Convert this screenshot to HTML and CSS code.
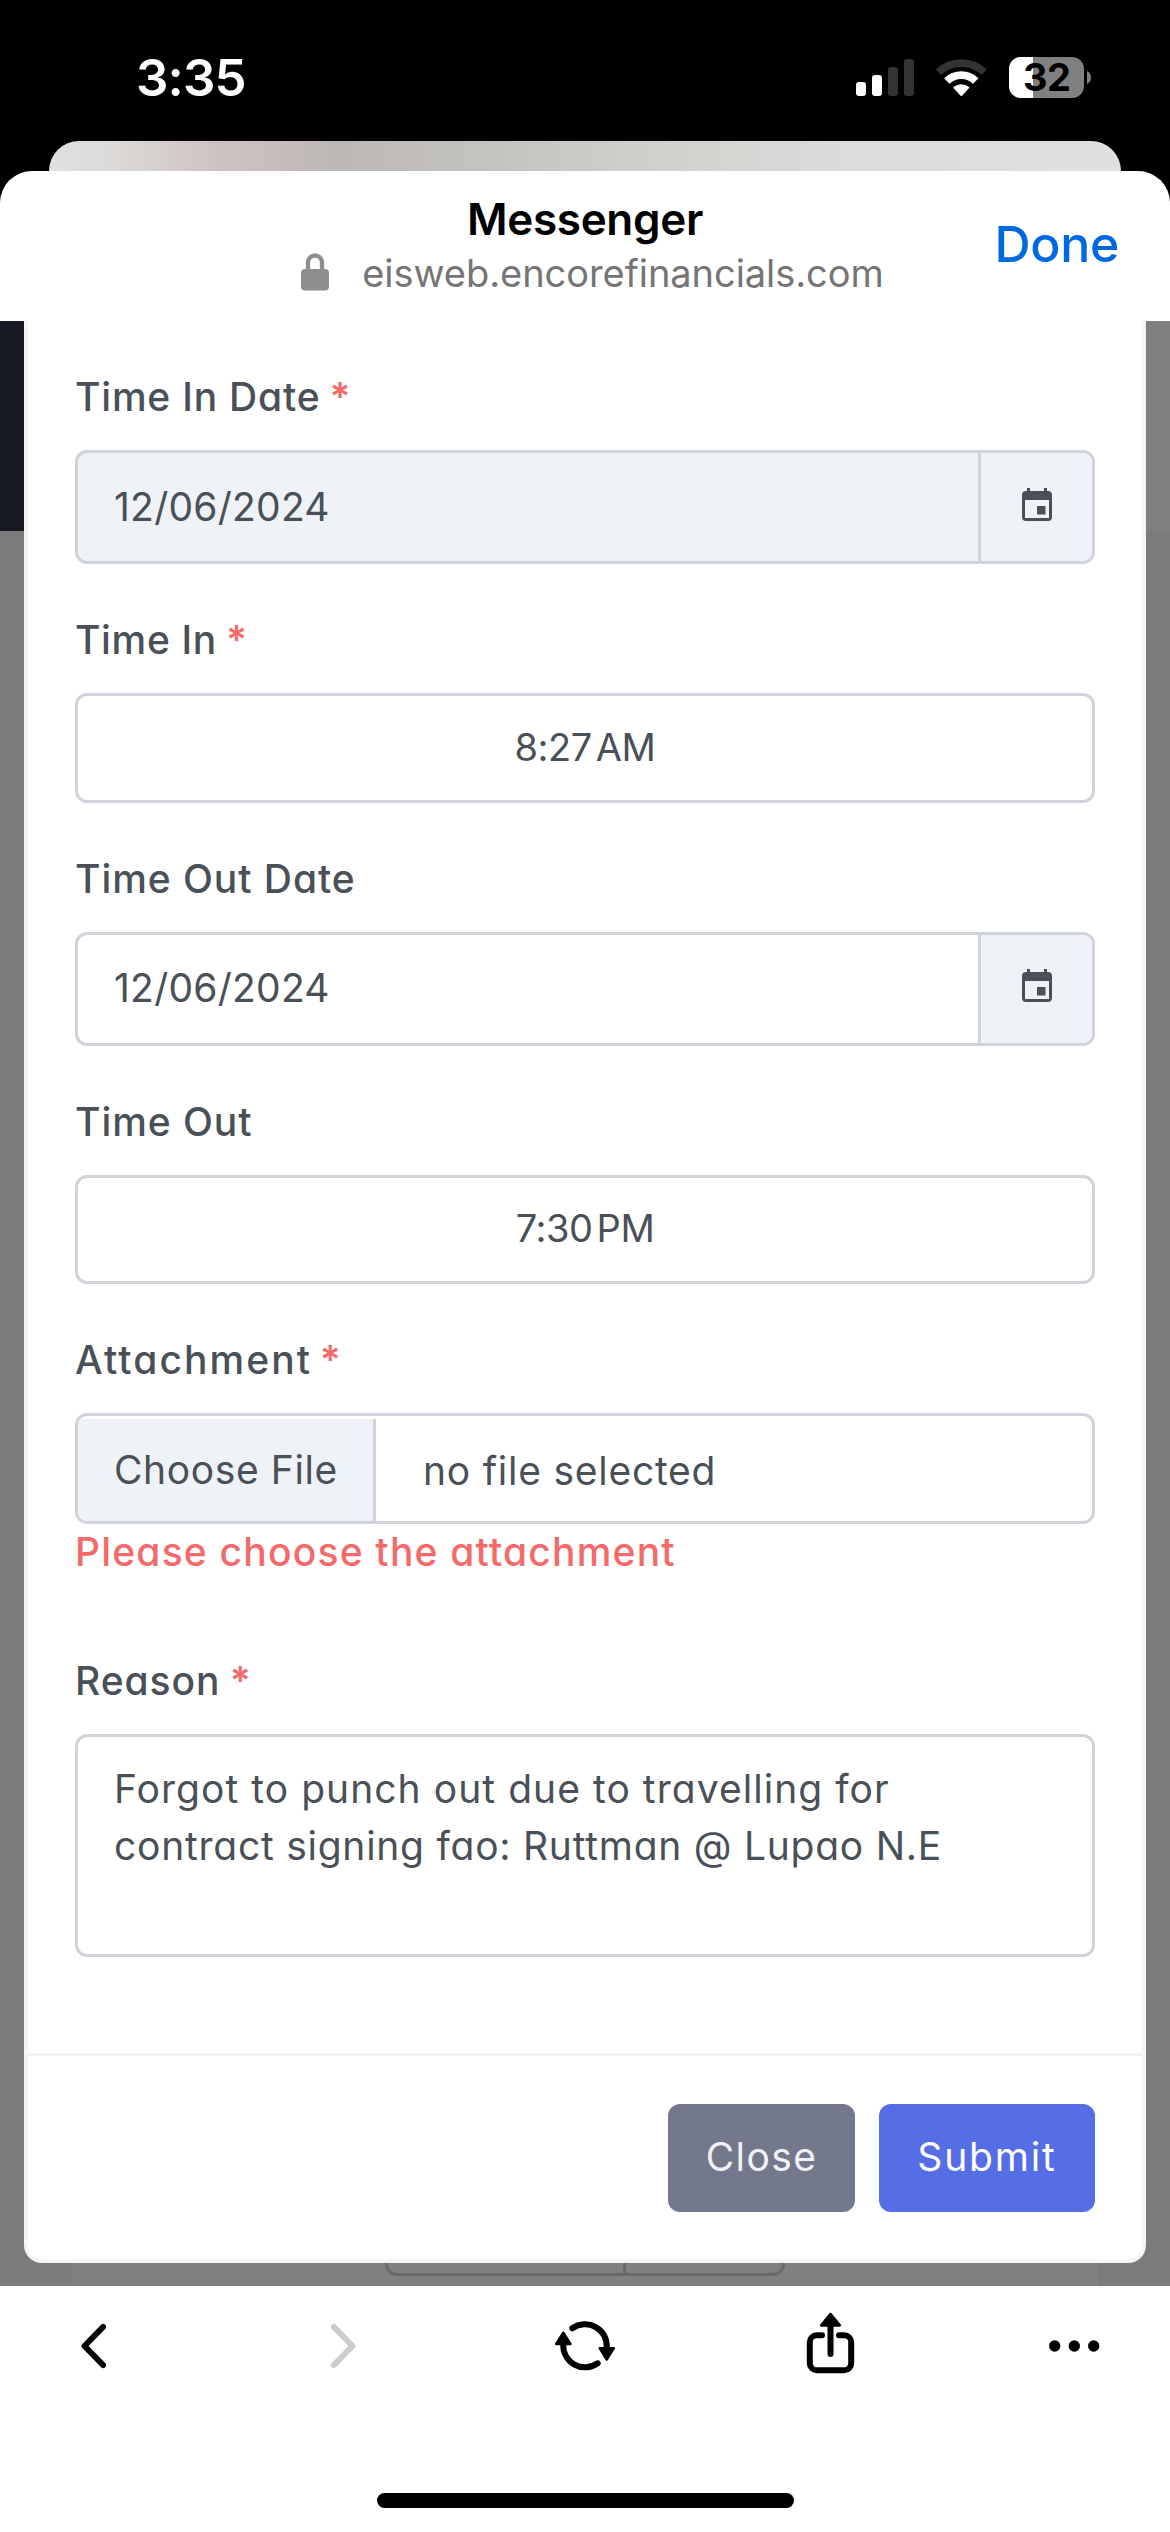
FILE: index.html
```html
<!DOCTYPE html>
<html lang="en">
<head>
<meta charset="utf-8">
<title>Messenger</title>
<link rel="stylesheet" href="styles.css">
</head>
<body>
<div class="status-bar">
  <span class="clock">3:35</span>
  <div class="status-icons">
    <svg width="58" height="42" viewBox="0 0 58 42">
      <rect x="0" y="25" width="10" height="14" rx="3" fill="#fff"/>
      <rect x="16" y="18" width="10" height="21" rx="3" fill="#fff"/>
      <rect x="32" y="10" width="10" height="29" rx="3" fill="#333"/>
      <rect x="48" y="2" width="10" height="37" rx="3" fill="#333"/>
    </svg>
    <svg width="51" height="42" viewBox="0 0 51 42" fill="none" stroke-width="7.7">
      <path d="M2.4 15.3A33 33 0 0 1 48.2 15.3" stroke="#333"/>
      <path d="M10.8 24A20.8 20.8 0 0 1 39.8 24" stroke="#fff"/>
      <path d="M25.3 38L18.4 30.6A11 11 0 0 1 32.2 30.6Z" fill="#fff" stroke="#fff" stroke-width="2" stroke-linejoin="round"/>
    </svg>
    <div class="battery">
      <svg width="83" height="42" viewBox="0 0 83 42">
        <rect x="0" y="0" width="75" height="41" rx="12" fill="#808080"/>
        <path d="M24 0H12A12 12 0 0 0 0 12V29A12 12 0 0 0 12 41H24Z" fill="#fff"/>
        <path d="M78 14Q82 16 82 20.500T78 27Z" fill="#808080"/>
      </svg>
      <span>32</span>
    </div>
  </div>
</div>
<div class="sheet-behind"></div>
<div class="sheet">
  <header class="browser-header">
    <div class="page-info">
      <div class="page-title">Messenger</div>
      <div class="page-url">
        <svg width="28" height="38" viewBox="0 0 28 38">
          <path d="M7 18V9.500a7 7 0 0 1 14 0V18" fill="none" stroke="#8e8e8e" stroke-width="4.300"/>
          <rect x="0" y="16" width="28" height="21.500" rx="4" fill="#8e8e8e"/>
        </svg>
        <span>eisweb.encorefinancials.com</span>
      </div>
    </div>
    <a class="done">Done</a>
  </header>

  <main class="webview">
    <div class="modal">
      <form class="modal-body">
        <div class="field">
          <label class="in-date">Time In Date <b>*</b></label>
          <div class="control group disabled">
            <span class="value">12/06/2024</span>
            <span class="addon">
              <svg width="30" height="34" viewBox="0 0 30 34"><path fill="#495057" fill-rule="evenodd" d="M5 0h3v3h14V0h3v3h1a4 4 0 0 1 4 4v22a4 4 0 0 1-4 4H4a4 4 0 0 1-4-4V7a4 4 0 0 1 4-4h1zM3 12v18h24V12zM15 18h8.500v8.500H15z"/></svg>
            </span>
          </div>
        </div>
        <div class="field">
          <label class="time-in">Time In <b>*</b></label>
          <div class="control time">8:27<i></i>AM</div>
        </div>
        <div class="field">
          <label>Time Out Date</label>
          <div class="control group out">
            <span class="value">12/06/2024</span>
            <span class="addon">
              <svg width="30" height="34" viewBox="0 0 30 34"><path fill="#495057" fill-rule="evenodd" d="M5 0h3v3h14V0h3v3h1a4 4 0 0 1 4 4v22a4 4 0 0 1-4 4H4a4 4 0 0 1-4-4V7a4 4 0 0 1 4-4h1zM3 12v18h24V12zM15 18h8.500v8.500H15z"/></svg>
            </span>
          </div>
        </div>
        <div class="field">
          <label>Time Out</label>
          <div class="control time out">7:30<i></i>PM</div>
        </div>
        <div class="field attachment">
          <label class="wide">Attachment <b>*</b></label>
          <div class="control file">
            <span class="choose">Choose File</span>
            <span class="filename">no file selected</span>
          </div>
          <div class="error">Please choose the attachment</div>
        </div>
        <div class="field">
          <label>Reason <b>*</b></label>
          <div class="control reason"><span class="line-1">Forgot to punch out due to travelling for</span><br>contract signing fao: Ruttman @ Lupao N.E</div>
        </div>
      </form>
      <footer class="modal-footer">
        <span class="btn close">Close</span>
        <span class="btn submit">Submit</span>
      </footer>
    </div>
    <div class="pager"><span></span><span></span></div>
  </main>

  <nav class="toolbar">
    <svg width="60" height="70" viewBox="0 0 60 70" fill="none" stroke="#000" stroke-width="6" stroke-linecap="round" stroke-linejoin="round"><path d="M39 16L20.500 35L39 54"/></svg>
    <svg width="60" height="70" viewBox="0 0 60 70" fill="none" stroke="#ccc" stroke-width="6" stroke-linecap="round" stroke-linejoin="round"><path d="M25 16L43.500 35L25 54"/></svg>
    <svg width="62" height="70" viewBox="-2 -5 62 70" fill="none" stroke="#000" stroke-width="6" stroke-linecap="round" stroke-linejoin="round">
      <path d="M17.300 12.300A21.800 21.800 0 0 1 51.700 32M42.700 47.300A21.800 21.800 0 0 1 8.300 28"/>
      <path d="M44.700 32.200H58.800L51.700 43.500ZM1.200 28H15.400L8.300 16.700Z" fill="#000" stroke-width="2.500"/>
    </svg>
    <svg width="60" height="70" viewBox="0.5 1 60 70" fill="none" stroke="#000" stroke-width="6" stroke-linecap="round" stroke-linejoin="round">
      <path d="M22.500 25.300H17.300A7 7 0 0 0 10.300 32.300V53.300A7 7 0 0 0 17.300 60.300H44.700A7 7 0 0 0 51.700 53.300V32.300A7 7 0 0 0 44.700 25.300H39.500"/>
      <path d="M31 12V44"/>
      <path d="M21.800 15.300H40.200L31 4.200Z" fill="#000" stroke-width="2.800"/>
    </svg>
    <svg width="60" height="70" viewBox="0 0 60 70"><circle cx="10.700" cy="35" r="5.700"/><circle cx="30.300" cy="35" r="5.700"/><circle cx="49.700" cy="35" r="5.700"/></svg>
  </nav>
  <div class="home-bar"></div>
</div>
</body>
</html>
```
FILE: styles.css
```css
* { box-sizing: border-box; }

body {
  margin: 0;
  width: 1170px;
  height: 2532px;
  overflow: hidden;
  background: #000;
  font-family: "Inter", "Liberation Sans", sans-serif;
}

svg { display: block; flex: none; }

/* Device status bar */
.status-bar {
  display: flex;
  justify-content: space-between;
  align-items: flex-start;
  height: 141px;
  padding: 48px 78px 0 136px;
}
.clock {
  color: #fff;
  font-size: 51px;
  font-weight: 600;
  line-height: 60px;
  letter-spacing: -0.85px;
}
.status-icons { display: flex; gap: 22px; padding-top: 9px; }
.battery { position: relative; }
.battery span {
  position: absolute;
  left: 14px;
  top: -4px;
  font-size: 38px;
  font-weight: 700;
  line-height: 48px;
  letter-spacing: -0.5px;
}

/* Stacked sheets */
.sheet-behind {
  height: 30px;
  margin: 0 49px;
  border-radius: 30px 30px 0 0;
  background: linear-gradient(90deg, #e0e0e0, #dddcda 5%, #cec2c0 16%, #bdb8b5 27%, #c5c5c2 44%, #d0cfca 55%, #dcdcdc 75%, #e0e0e0);
}
.sheet {
  height: 2361px;
  border-radius: 32px 32px 0 0;
  background: #fff;
  overflow: hidden;
}
.browser-header {
  display: grid;
  grid-template-columns: 1fr auto 1fr;
  height: 150px;
  padding-top: 22px;
}
.page-info { grid-column: 2; }
.page-title {
  font-size: 44px;
  font-weight: 600;
  line-height: 52px;
  letter-spacing: -0.3px;
  text-align: center;
}
.page-url {
  display: flex;
  gap: 33px;
  margin-top: 2px;
  padding-left: 15px;
  color: #757575;
  font-size: 38px;
  line-height: 52px;
  letter-spacing: -0.05px;
}
.page-url svg { margin-top: 6px; }
.done {
  justify-self: end;
  margin: 21px 51px 0 0;
  color: #0068e0;
  font-size: 50px;
  font-weight: 500;
  line-height: 60px;
  letter-spacing: -0.3px;
}

/* Dimmed page with the open dialog */
.webview {
  height: 1965px;
  padding: 0 24px;
  background:
    linear-gradient(#161922, #161922) 0 0 / 585px 210px no-repeat,
    linear-gradient(#808080, #808080) 100% 0 / 585px 210px no-repeat,
    linear-gradient(#808080, #808080) 72px 100% / 1026px 60px no-repeat,
    #7b7b7c;
}
.modal {
  height: 1942px;
  border: 4px solid #f5f5f5;
  border-top: 0;
  border-radius: 0 0 18px 18px;
  background: #fff;
  color: #495057;
  font-size: 39px;
  line-height: 58px;
  letter-spacing: 0.75px;
  white-space: nowrap;
  font-feature-settings: "cv11";
}
.modal-body { height: 1732px; padding: 47px 47px 0; }
.field { margin-bottom: 47px; }
.field label {
  display: block;
  margin-bottom: 24px;
  font-weight: 500;
  letter-spacing: 0.95px;
}
.field label b {
  margin-left: -2px;
  color: #f46a6a;
  font-weight: 600;
}
.field label.in-date { letter-spacing: 0.8px; }
.field label.time-in { letter-spacing: 0.65px; }
.field label.wide { letter-spacing: 2.1px; }
.field label.wide b { margin-left: -5px; }
.control {
  border: 3px solid #ced4da;
  border-radius: 12px;
  overflow: hidden;
}
.group { display: flex; height: 114px; }
.disabled { background: #eff2f7; }
.value { flex: 1; padding: 25px 0 0 36px; letter-spacing: 0.25px; }
.addon {
  display: flex;
  justify-content: center;
  width: 114px;
  padding-top: 35px;
  border-left: 3px solid #ced4da;
  background: #eff2f7;
}
.group.out .value { padding-top: 24px; }
.group.out .addon { padding-top: 34px; }
.time {
  display: flex;
  justify-content: center;
  height: 110px;
  padding-top: 22px;
  font-size: 38px;
  letter-spacing: -0.45px;
}
.time i { width: 4px; }
.time.out { height: 109px; padding-top: 21px; }
.attachment { margin-bottom: 71px; }
.file { display: flex; height: 111px; padding-top: 3px; }
.choose {
  width: 298px;
  padding: 22px 0 0 36px;
  border-right: 3px solid #ced4da;
  background: #eff2f7;
  letter-spacing: 0.6px;
}
.filename { padding: 23px 0 0 47px; }
.error {
  margin-top: -1px;
  color: #f46a6a;
  font-weight: 500;
  letter-spacing: 1.2px;
}
.reason { height: 223px; padding: 23px 0 0 36px; line-height: 57px; }
.line-1 { letter-spacing: 1.05px; }

.modal-footer {
  display: flex;
  justify-content: flex-end;
  gap: 24px;
  padding: 48px 47px 0;
  border-top: 3px solid #eff2f7;
}
.btn {
  height: 108px;
  padding-top: 24px;
  border-radius: 12px;
  text-align: center;
}
.close { width: 187px; background: #74788d; color: #eff2f7; letter-spacing: 1.4px; }
.submit { width: 216px; background: #556ee6; color: #fff; letter-spacing: 1.85px; }

/* Bottom edge of the page control under the dialog */
.pager { display: flex; height: 13px; width: 400px; margin-left: 361px; }
.pager span {
  flex: 0 0 241px;
  border: 3px solid #676a6d;
  border-top: 0;
  border-radius: 0 0 0 12px;
}
.pager span + span { flex: 1; border-left: 0; border-radius: 0 0 12px 0; }

.toolbar {
  display: flex;
  justify-content: space-between;
  padding: 25px 66px 0 64px;
}
.home-bar {
  width: 417px;
  height: 15px;
  margin: 112px auto 0;
  border-radius: 8px;
  background: #000;
}
```
